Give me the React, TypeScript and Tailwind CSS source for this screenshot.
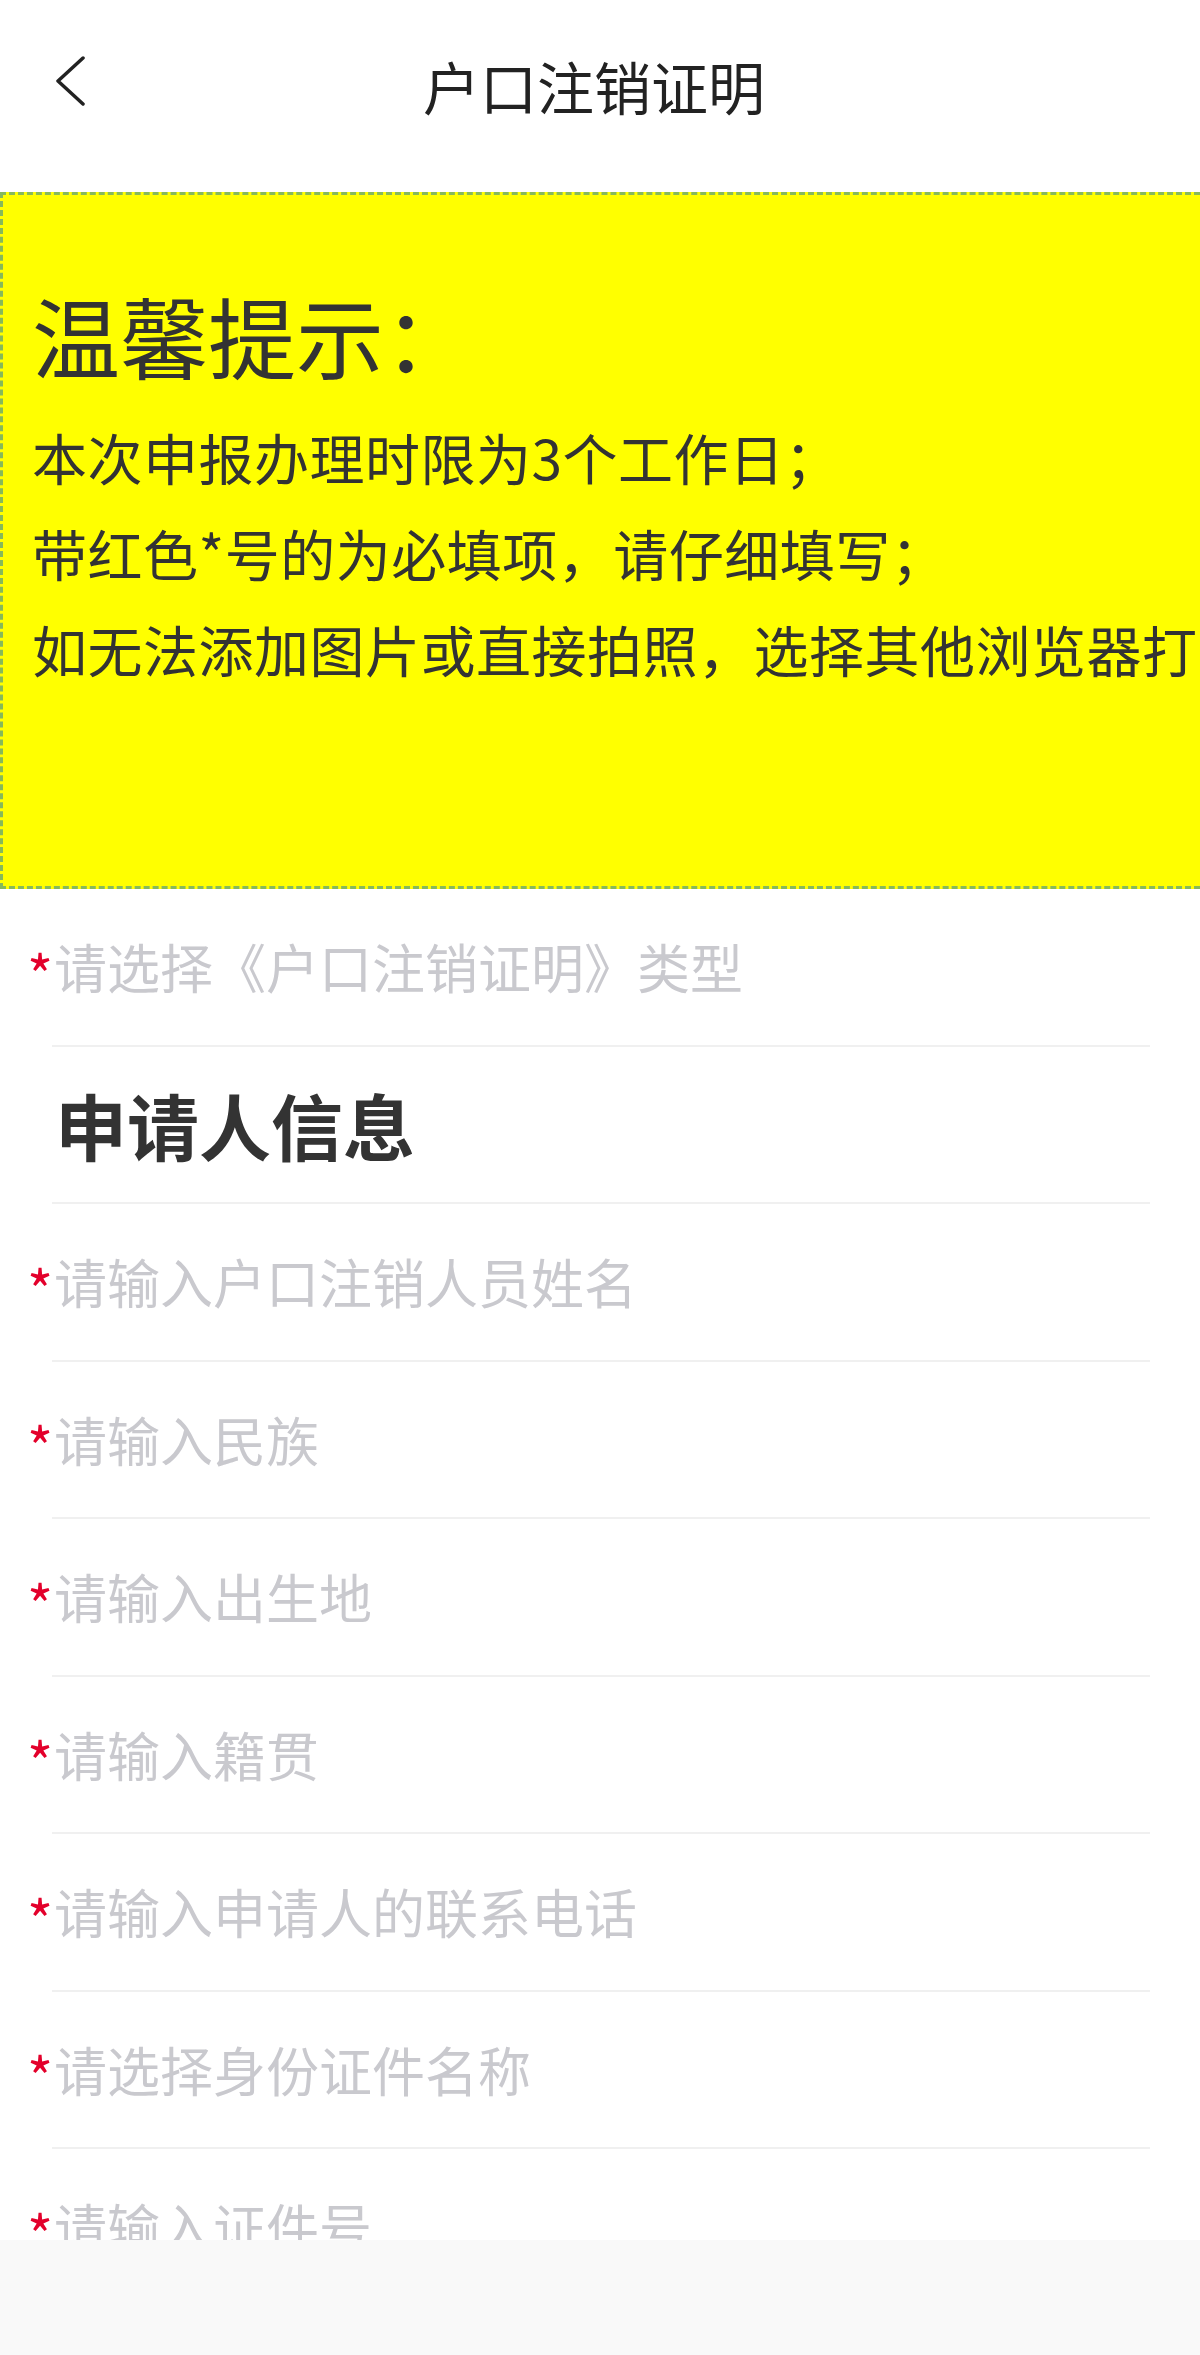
import React from 'react';

const cjk = { fontFamily: '"Noto Sans CJK SC", "Noto Sans", sans-serif' };

const fields: string[] = [
  '请输入户口注销人员姓名',
  '请输入民族',
  '请输入出生地',
  '请输入籍贯',
  '请输入申请人的联系电话',
  '请选择身份证件名称',
  '请输入证件号',
];

const Divider: React.FC = () => <div className="h-[2px] ml-[52px] mr-[50px] bg-[#f0f0f0]" />;

const FieldRow: React.FC<{ label: string }> = ({ label }) => (
  <div className="flex items-center h-[155.5px] pl-[27px]">
    <span className="w-[27px] text-[#e3002b] text-[56px] leading-none mt-[12px]">*</span>
    <span className="text-[#c9c9ce] text-[53px] leading-none">{label}</span>
  </div>
);

const App: React.FC = () => {
  return (
    <div className="w-full overflow-hidden bg-white min-h-[2355px]" style={cjk}>
      <header className="relative h-[170px] flex items-center justify-center">
        <div className="absolute left-[54px] top-[56px]">
          <svg width="34" height="50" viewBox="0 0 34 50" fill="none">
            <path d="M29 2 L4 25 L29 48" stroke="#222" strokeWidth="3.5" strokeLinecap="round" strokeLinejoin="round" />
          </svg>
        </div>
        <h1 className="text-[57px] leading-none text-[#222] font-normal -ml-[12px]">户口注销证明</h1>
      </header>

      <div className="mt-[22px] bg-[#ffff00] border-l-[3px] border-t-[3px] border-b-[3px] border-dashed border-[#86b95b] pl-[29px] pt-[95px] pb-[190px] text-[#333]">
        <div className="text-[88px] leading-none whitespace-nowrap">温馨提示：</div>
        <div className="mt-[30px] text-[55px] leading-[96px] tracking-[0.5px] whitespace-nowrap">
          <p>本次申报办理时限为3个工作日；</p>
          <p>带红色*号的为必填项，请仔细填写；</p>
          <p>如无法添加图片或直接拍照，选择其他浏览器打开</p>
        </div>
      </div>

      <FieldRow label="请选择《户口注销证明》类型" />
      <Divider />
      <div className="flex items-center h-[155.5px] pl-[55px]">
        <h2 className="text-[72px] leading-none font-bold text-[#333]">申请人信息</h2>
      </div>
      {fields.map((f) => (
        <React.Fragment key={f}>
          <Divider />
          <FieldRow label={f} />
        </React.Fragment>
      ))}

      <div className="fixed left-0 right-0 bottom-0 h-[115px] bg-[#f9f9f9]" />
    </div>
  );
};

export default App;
